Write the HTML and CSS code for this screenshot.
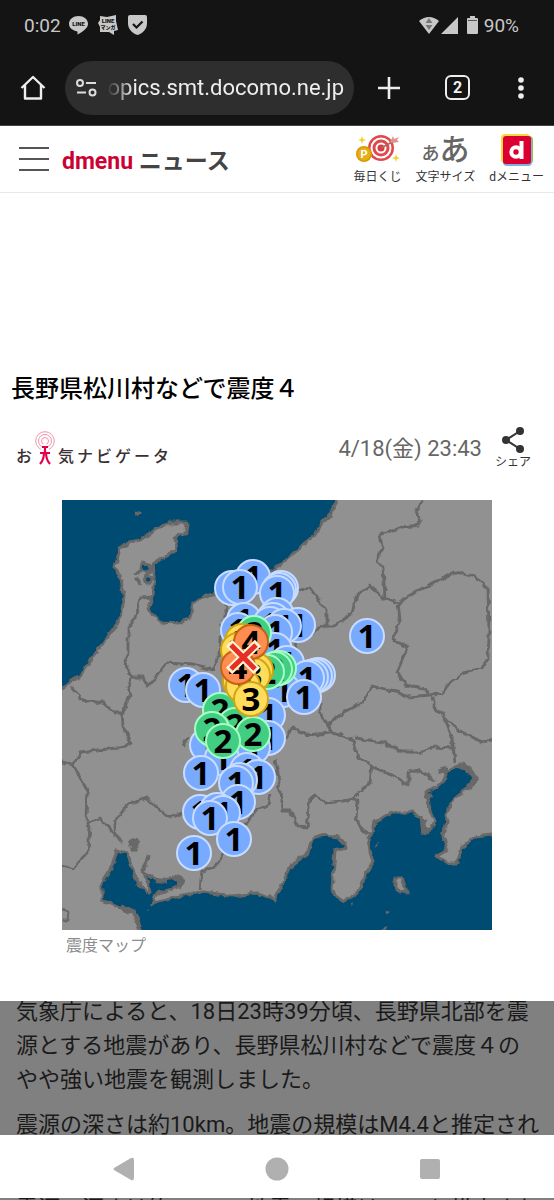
FILE: index.html
```html
<!DOCTYPE html>
<html lang="ja">

<head>
  <meta charset="UTF-8">
  <meta name="viewport" content="width=device-width, initial-scale=1.0">
  <title>長野県松川村などで震度４</title>
  <link rel="stylesheet" href="styles.css">
</head>

<body>
  <div class="browser">
    <div class="status">
      <span>0:02</span>
      <svg width="19" height="19" viewBox="0 0 19 19">
        <path fill="#c8c8c8" d="M9.500 0C4.300 0 0 3.400 0 7.700c0 3.800 3.400 6.900 8 7.500.9.200.5 2 .3 3.300 2.600-1 6.500-3.600 8.800-6.300 1.300-1.400 1.900-2.800 1.900-4.500C19 3.400 14.700 0 9.500 0z"/>
        <text x="9.500" y="10" class="tiny">LINE</text>
      </svg>
      <svg class="gap" width="20" height="20" viewBox="0 0 20 20">
        <path fill="#c8c8c8" d="M2 1l7 1 9-2 0 6 2 9-4 1 0 4-5-3-9 0 0-5-2-4 2-3z"/>
        <text x="10" y="8" class="tiny">LINE</text>
        <text x="10" y="14" class="tiny kana">マンガ</text>
      </svg>
      <svg class="gap" width="19" height="20" viewBox="0 0 19 20">
        <path fill="#c8c8c8" d="M2 0h15q2 0 2 2v6c0 6-4 10-9.500 12C4 18 0 14 0 8V2q0-2 2-2z"/>
        <path fill="none" stroke="#141414" stroke-width="2.200" d="M5 9l3.500 3.500 6-6"/>
      </svg>
      <span class="spacer"></span>
      <svg width="20" height="17" viewBox="0 0 20 17">
        <path fill="#c8c8c8" d="M0 4Q10-4 20 4L10 17z"/>
        <path fill="#777" d="M10 1l3.500 5h-7zM6.500 8h7L10 13z"/>
      </svg>
      <svg width="17" height="17" viewBox="0 0 17 17">
        <path fill="#c8c8c8" d="M17 0v17H0z"/>
      </svg>
      <svg class="battery" width="11" height="18" viewBox="0 0 11 18">
        <path fill="#c8c8c8" d="M3 0h5v2h2q1 0 1 1v14q0 1-1 1H1q-1 0-1-1V3q0-1 1-1h2z"/>
        <path stroke="#555" d="M1 4.500h9"/>
      </svg>
      <span>90%</span>
    </div>

    <div class="toolbar">
      <button aria-label="ホーム">
        <svg width="26" height="26" viewBox="0 0 26 26" fill="none" stroke="#eee" stroke-width="2.400" stroke-linejoin="round">
          <path d="M1.500 13L13 2l11.500 11M5 10v13.500h16V10"/>
        </svg>
      </button>
      <div class="address">
        <svg width="21" height="18" viewBox="0 0 21 18" fill="none" stroke="#ddd" stroke-width="2">
          <circle cx="4" cy="4" r="3"/>
          <circle cx="16.500" cy="13.500" r="3"/>
          <path d="M10 4h10M1 13.500h9"/>
        </svg>
        <input type="text" aria-label="アドレス" value="opics.smt.docomo.ne.jp">
      </div>
      <button class="add" aria-label="新しいタブ">
        <svg width="22" height="22" viewBox="0 0 22 22" stroke="#eee" stroke-width="2.600">
          <path d="M11 0v22M0 11h22"/>
        </svg>
      </button>
      <button class="tabs" aria-label="タブ">2</button>
      <button class="more" aria-label="メニュー">
        <svg width="6" height="22" viewBox="0 0 6 22" fill="#eee">
          <circle cx="3" cy="3" r="2.800"/>
          <circle cx="3" cy="11" r="2.800"/>
          <circle cx="3" cy="19" r="2.800"/>
        </svg>
      </button>
    </div>
  </div>

  <header class="header">
    <button class="burger" aria-label="メニューを開く">
      <svg width="30" height="25" viewBox="0 0 30 25" stroke="#555" stroke-width="2">
        <path d="M0 1h30M0 12h30M0 23h30"/>
      </svg>
    </button>
    <a class="logo" href="#"><span class="red">dmenu</span> <span>ニュース</span></a>
    <nav class="links">
      <a href="#">
        <svg width="44" height="30" viewBox="0 0 44 30">
          <circle cx="25" cy="15" r="13" fill="#e2474c"/>
          <circle cx="25" cy="15" r="10.500" fill="#fff"/>
          <circle cx="25" cy="15" r="8.500" fill="#e2474c"/>
          <circle cx="25" cy="15" r="5.500" fill="#fff"/>
          <circle cx="25" cy="15" r="3.500" fill="#dc3940"/>
          <path stroke="#a9695a" stroke-width="1.500" d="M25 15L40 7"/>
          <path fill="#dc9291" d="M34 9l3-6 1 3 5-2-2 3 2 2-7 1z"/>
          <circle cx="8" cy="21" r="8" fill="#d99a08"/>
          <circle cx="8" cy="21" r="6.500" fill="#e6ae17"/>
          <text x="8" y="25" class="coin">P</text>
          <path fill="#f6cc2c" d="M6 3l1 3 3 1-3 1-1 3-1-3-3-1 3-1zM40 21l1 3 3 1-3 1-1 3-1-3-3-1 3-1z"/>
        </svg>
        <span>毎日くじ</span>
      </a>
      <a href="#">
        <span class="size"><small>あ</small>あ</span>
        <span>文字サイズ</span>
      </a>
      <a href="#">
        <svg width="34" height="34" viewBox="0 0 34 34">
          <rect x="1" y="1" width="29" height="29" rx="4" fill="#ffd83b"/>
          <rect x="4" y="3" width="29" height="28" rx="4" fill="#8fc448"/>
          <rect x="3" y="5" width="29" height="28" rx="4" fill="#79b3de"/>
          <rect x="3" y="3" width="28" height="28" rx="3" fill="#dc0032"/>
          <circle cx="16" cy="19" r="4.700" fill="none" stroke="#fff" stroke-width="4"/>
          <path stroke="#fff" stroke-width="4" d="M21.500 8v18"/>
        </svg>
        <span>dメニュー</span>
      </a>
    </nav>
  </header>

  <main class="news">
    <div class="ad"></div>
    <h1>長野県松川村などで震度４</h1>
    <div class="meta">
      <div class="provider" role="img" aria-label="お天気ナビゲータ">
        <span>お</span>
        <svg width="20" height="34" viewBox="0 0 20 34" fill="none" stroke="#f093ac">
          <circle cx="10" cy="10" r="9.300"/>
          <circle cx="10" cy="10" r="6.500"/>
          <circle cx="10" cy="10" r="3.500"/>
          <path fill="#fff" stroke="none" d="M10 10l-5 10h10z"/>
          <path stroke="#e5004f" stroke-width="2.200" d="M7 16h6M5 22h10M10 16v6M9 21q0 8-4 12M11 21q0 8 4 12"/>
        </svg>
        <span>気</span><span>ナ</span><span>ビ</span><span>ゲ</span><span>ー</span><span>タ</span>
      </div>
      <time>4/18(金) 23:43</time>
      <button class="share">
        <svg width="24" height="28" viewBox="0 0 24 28" fill="#333">
          <path fill="none" stroke="#333" stroke-width="2" d="M19 5L5 14l14 9"/>
          <circle cx="19" cy="5" r="4"/>
          <circle cx="5" cy="14" r="4"/>
          <circle cx="19" cy="23" r="4"/>
        </svg>
        シェア
      </button>
    </div>

    <figure>
      <svg class="map" viewBox="62 500 430 430" role="img" aria-label="震度マップ">
        <defs>
          <!-- breaks up the straight runs of the coast and the prefecture borders -->
          <filter id="rough" x="-5%" y="-5%" width="110%" height="110%">
            <feTurbulence type="fractalNoise" baseFrequency="0.13" numOctaves="2" seed="4"/>
            <feDisplacementMap in="SourceGraphic" scale="6" xChannelSelector="R" yChannelSelector="G"/>
          </filter>
        </defs>
        <rect x="62" y="500" width="430" height="430" fill="#004b71"/>
        <g filter="url(#rough)" stroke="#676767" stroke-width="3" stroke-linejoin="round">
          <path fill="#919191" d="M50 695L62 688 77 677 88 665 100 647 115 628 122 612 124 595 120 575 115 568 120 548 130 542 140 540 155 530 170 523 187 523 186 532 175 538 177 550 163 557 153 565 155 578 153 595 148 610 160 622 180 623 190 618 193 602 203 597 217 593 245 582 275 569 295 552 312 538 322 522 330 515 336 500 340 485H510V835H492L475 837 462 847 457 863 448 863 437 856 447 850 443 833 448 823 445 813 455 797 472 785 475 775 462 765 448 770 442 783 427 792 430 810 435 822 428 833 422 833 420 817 412 812 392 812 375 822 373 833 368 838 370 852 373 862 357 892 343 902 332 890 335 850 347 847 338 837 325 835 312 838 308 853 292 865 275 897 275 902 270 897 257 893 233 896 203 892 183 895 152 904 157 893 178 887 180 878 160 880 143 873 150 887 151 893 140 887 132 867 127 853 117 850 112 867 102 883 102 900 120 908 135 913 140 930 140 945H50z"/>
          <path fill="none" stroke-width="6" d="M128 844l9-3-4 10M439 772l9-3M459 765l10 5 6 9-6 8M430 793l-4 6M423 820l2 13 4-5M155 880l12 1M172 877l10 3-3 7M120 907l14 5 6 16"/>
          <path fill="#004b71" stroke-width="3" d="M142 563l7 1 3 6-6 3-5-3zM146 575l7 3-4 6-5-3z"/>
          <path fill="none" d="M136 577l4 7M135 573l6-2M148 855l-5 18"/>
          <path fill="#919191" d="M395 878l7 0 5 14-7 0-5-7z"/>
          <path fill="none" d="M134 512l6 1-4 2M387 911l2 1M352 904l1 1M147 908l1 1M376 845l1 1M387 925l-4 6"/>
          <g fill="none" stroke-width="2.800">
            <path d="M152 597L140 598 135 618 128 628 128 655 125 665 132 677 143 677 148 686 167 663 193 665 213 670 220 652 222 628 227 608 223 595"/>
            <path d="M132 677L128 688 130 695 122 712 123 727 131 742 127 747 80 752 73 765 62 762 50 758"/>
            <path d="M72 687L82 700 103 703 115 713 123 713"/>
            <path d="M73 765L87 790 86 820 90 827 88 853 73 868 62 865 50 862"/>
            <path d="M88 822L100 818 112 832 123 843M115 832L115 822 127 805 147 798 170 818 183 813 200 812"/>
            <path d="M275 760L278 773 282 810 290 810 297 827 307 828 310 798 315 795 325 803 350 800 370 783 372 765 358 757 353 740 332 733 305 735 292 727 287 737 275 745"/>
            <path d="M332 733L320 713 320 702M328 725L342 713 363 702 372 686 398 692 408 697 430 695 425 688 405 685 397 672 408 647 393 640 400 620 398 603 415 592 445 577 455 572 475 577 488 588 489 635 488 658 482 668 462 673 447 685 442 694 430 695"/>
            <path d="M425 495L417 508 420 525 402 527 380 535 382 547 377 562 383 568 385 598 398 603M385 600L370 585 357 595 352 613 335 625 327 625 327 610 317 598 310 588 300 590M327 625L317 630 295 642 300 662"/>
            <path d="M432 697L435 708 443 715 452 737 455 763M438 710L458 730 482 742 500 738"/>
            <path d="M355 738L382 742 402 752 422 752 435 747 452 748M372 767L388 773 408 785 408 772 418 770 435 780M350 798L358 800 357 820 363 832 372 833"/>
            <path d="M200 890L202 870 215 867 223 853 257 810 268 805 270 795M184 747v-5l6-6"/>
            <path d="M62 910l6 2-1 8-5 0"/>
          </g>
        </g>
        <g id="points"></g>
        <path stroke="#fff3d0" stroke-width="9" d="M229 643l28 28M258 643l-29 28"/>
        <path stroke="#e62e27" stroke-width="5" d="M231 645l24 24M256 645l-25 24"/>
      </svg>
      <figcaption>震度マップ</figcaption>
    </figure>
  </main>

  <article class="body">
    <p>気象庁によると、18日23時39分頃、長野県北部を震源とする地震があり、長野県松川村などで震度４のやや強い地震を観測しました。</p>
    <p>震源の深さは約10km。地震の規模はM4.4と推定され</p>
  </article>

  <div class="navbar">
    <button aria-label="戻る">
      <svg width="22" height="24" viewBox="0 0 22 24"><path fill="#b0b0b0" d="M1 11L18 1q3-1 3 2v18q0 3-3 2L1 13q-1-1 0-2z"/></svg>
    </button>
    <button aria-label="ホーム">
      <svg width="24" height="24" viewBox="0 0 24 24"><circle cx="12" cy="12" r="11.500" fill="#b0b0b0"/></svg>
    </button>
    <button aria-label="履歴">
      <svg width="22" height="22" viewBox="0 0 22 22"><rect x="1" y="1" width="20" height="20" rx="2" fill="#b0b0b0"/></svg>
    </button>
  </div>
  <div class="edge" aria-hidden="true">震源の深さは約10km。地震の規模はM4.4と推定され</div>

  <script>
    // [震度, x, y] 後ろのものほど上に重なる
    var points = [
      [1, 253, 577], [1, 232, 588], [1, 240, 587], [1, 281, 588], [1, 279, 590], [1, 277, 593],
      [1, 367, 636], [1, 244, 620], [1, 238, 630], [1, 277, 615], [1, 273, 620], [1, 270, 624],
      [1, 298, 625], [1, 284, 626], [1, 275, 632], [1, 275, 650], [1, 287, 663],
      [1, 318, 675], [1, 315, 676], [1, 311, 677], [1, 307, 678], [1, 283, 690], [1, 304, 697],
      [1, 186, 685], [1, 203, 690], [1, 268, 715], [1, 268, 738], [1, 207, 745], [1, 253, 747],
      [1, 222, 758], [1, 247, 770], [1, 258, 777], [1, 240, 780], [1, 236, 783], [1, 201, 773],
      [1, 238, 802], [1, 200, 812], [1, 217, 810], [1, 223, 813], [1, 210, 818],
      [1, 234, 839], [1, 194, 853],
      [2, 254, 633], [2, 279, 668], [2, 275, 669], [2, 267, 672], [2, 220, 710],
      [2, 235, 725], [2, 212, 729], [2, 253, 734], [2, 223, 741],
      [3, 242, 641], [3, 238, 650], [3, 256, 670], [3, 253, 675], [3, 240, 681], [3, 243, 686], [3, 251, 699],
      [4, 251, 642], [4, 238, 667]
    ];
    var svgNs = 'http://www.w3.org/2000/svg';
    var group = document.getElementById('points');

    points.forEach(function (point) {
      var circle = document.createElementNS(svgNs, 'circle');
      circle.setAttribute('cx', point[1]);
      circle.setAttribute('cy', point[2]);
      circle.setAttribute('r', 17);
      circle.setAttribute('class', 'point level' + point[0]);
      group.appendChild(circle);

      var text = document.createElementNS(svgNs, 'text');
      text.setAttribute('x', point[1]);
      text.setAttribute('y', point[2] + 12);
      text.setAttribute('class', 'digit');
      text.textContent = point[0];
      group.appendChild(text);
    });
  </script>
</body>

</html>
```

FILE: styles.css
```css
* {
  box-sizing: border-box;
}

body {
  display: flex;
  flex-direction: column;
  height: 100vh;
  margin: 0;
  overflow: hidden;
  background: #fff;
  color: #333;
  font-family: Roboto, "Noto Sans CJK JP", sans-serif;
}

button {
  padding: 0;
  border: none;
  background: none;
  color: inherit;
  font-family: inherit;
  cursor: pointer;
}

a {
  color: inherit;
  text-decoration: none;
}

svg {
  display: block;
  flex-shrink: 0;
}

/* browser */
.browser {
  height: 126px;
  flex-shrink: 0;
  background: #141414;
  border-bottom: 1px solid #444;
}

.status {
  display: flex;
  align-items: center;
  height: 50px;
  padding: 0 35px 0 24px;
  color: #c8c8c8;
  font-size: 19px;
}

.status span + svg {
  margin-left: 8px;
}

.status .gap {
  margin-left: 10px;
}

.status .spacer {
  flex: 1;
}

.status .battery {
  margin: 0 6px 0 9px;
}

.status .spacer + svg {
  margin: 0 2px 0 0;
}

.tiny {
  fill: #141414;
  font-size: 6px;
  font-weight: 900;
  text-anchor: middle;
}

.kana {
  font-size: 5px;
}

.toolbar {
  display: flex;
  align-items: center;
  height: 75px;
  padding: 0 30px 0 20px;
}

.address {
  display: flex;
  align-items: center;
  flex: 1;
  min-width: 0;
  height: 54px;
  margin: 0 24px 0 19px;
  padding: 0 10px 0 11px;
  gap: 10px;
  border-radius: 27px;
  background: #2e2e2e;
}

.address input {
  flex: 1;
  min-width: 0;
  padding: 0;
  border: none;
  background: none;
  color: #eee;
  font-family: inherit;
  font-size: 22px;
  text-align: right;
  -webkit-mask-image: linear-gradient(to right, transparent, #000 26px);
  mask-image: linear-gradient(to right, transparent, #000 26px);
}

.add {
  margin-right: 45px;
}

.more {
  margin-left: 48px;
}

.tabs {
  width: 25px;
  height: 25px;
  border: 2px solid #eee;
  border-radius: 6px;
  color: #eee;
  font-size: 16px;
  font-weight: bold;
}

/* page header */
.header {
  display: flex;
  align-items: center;
  height: 67px;
  flex-shrink: 0;
  padding: 0 10px 0 19px;
  border-bottom: 1px solid #e8e8e8;
}

.logo {
  margin-left: 13px;
  font-size: 23px;
  font-weight: bold;
  color: #444;
  white-space: nowrap;
}

.red {
  color: #cc0033;
}

.links {
  display: flex;
  gap: 14px;
  margin-left: auto;
}

.links a {
  display: flex;
  flex-direction: column;
  align-items: center;
  justify-content: space-between;
  height: 52px;
  font-size: 12px;
  line-height: 16px;
  white-space: nowrap;
}

.links .size {
  height: 34px;
  color: #666;
  font-size: 30px;
  font-weight: 500;
  line-height: 34px;
}

.size small {
  font-size: 18px;
  line-height: 18px;
}

.coin {
  fill: #fff;
  font-size: 11px;
  font-weight: bold;
  text-anchor: middle;
}

/* news */
.news {
  flex-shrink: 0;
  padding-bottom: 39px;
}

.ad {
  height: 168px;
}

h1 {
  margin: 0 11px;
  color: #000;
  font-size: 24px;
  font-weight: 500;
  line-height: 56px;
}

.meta {
  display: flex;
  align-items: center;
  height: 62px;
  margin-bottom: 21px;
  padding: 0 23px 0 16px;
}

.provider {
  display: flex;
  align-items: flex-end;
  gap: 3px;
  color: #3a3033;
  font-size: 16px;
  font-weight: 500;
  line-height: 16px;
}

.meta time {
  margin-left: auto;
  padding-bottom: 4px;
  color: #666;
  font-size: 22px;
}

.share {
  display: flex;
  flex-direction: column;
  align-items: center;
  margin-left: 13px;
  font-size: 12px;
  line-height: 16px;
}

figure {
  margin: 0 62px;
}

.map {
  width: 100%;
}

figcaption {
  padding: 4px;
  color: #8c8c8c;
  font-size: 16px;
  line-height: 24px;
}

.point {
  stroke-width: 2;
}

.level1 {
  fill: #78aaff;
  stroke: #c8dcff;
}

.level2 {
  fill: #41cd82;
  stroke: #a5ffc3;
}

.level3 {
  fill: #ffdc5a;
  stroke: #d2a514;
}

.level4 {
  fill: #ff8c50;
  stroke: #c36414;
}

.digit {
  font-family: "Noto Sans", sans-serif;
  font-size: 33px;
  font-weight: bold;
  text-anchor: middle;
}

/* dimmed article text */
.body {
  flex: 1;
  min-height: 0;
  overflow: hidden;
  padding: 0 14px 0 16px;
  background: #808080;
  color: #1a1a1a;
  font-size: 22px;
  line-height: 34px;
}

.body p {
  margin: 0 0 11px;
}

.body p:first-child {
  margin-top: -6px;
}

/* android navigation */
.navbar {
  display: flex;
  align-items: center;
  justify-content: center;
  height: 63px;
  flex-shrink: 0;
  padding-top: 5px;
  gap: 130px;
}

.edge {
  height: 2px;
  flex-shrink: 0;
  overflow: hidden;
  padding: 0 16px;
  background: #808080;
  color: #1a1a1a;
  font-size: 22px;
  line-height: 22px;
  white-space: nowrap;
}
```
